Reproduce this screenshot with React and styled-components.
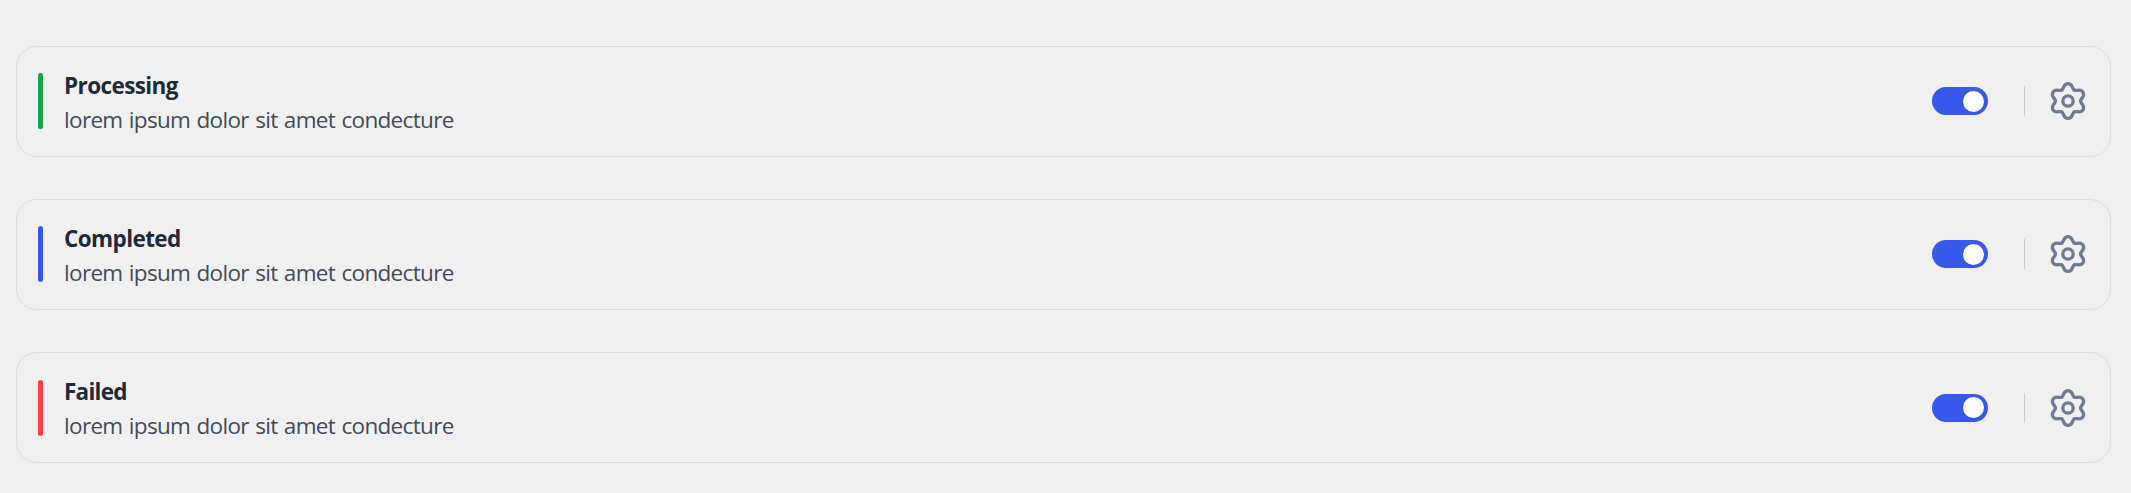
import { useState } from 'react';
import styled, { createGlobalStyle } from 'styled-components';



const statuses = [
    { title: 'Processing', text: 'lorem ipsum dolor sit amet condecture', color: '#16a34a', spacing: '-0.6px' },
    { title: 'Completed', text: 'lorem ipsum dolor sit amet condecture', color: '#3758f0', spacing: '-0.6px' },
    { title: 'Failed', text: 'lorem ipsum dolor sit amet condecture', color: '#ff3a44', spacing: '-0.75px' },
];

// one lobe of the gear, repeated every 60 degrees
const lobe = 'M-6.3 -10.9C-3.6 -12.5 -5 -17.4 0 -17.4C5 -17.4 3.6 -12.5 6.3 -10.9';

function GearIcon() {
    return (
        <svg width="42" height="42" viewBox="-21 -21 42 42" fill="none" stroke="currentColor" strokeWidth="3.3" strokeLinecap="round">
            {[0, 60, 120, 180, 240, 300].map((angle) => (
                <path key={angle} d={lobe} transform={`rotate(${angle})`} />
            ))}
            <circle r="5.2" />
        </svg>
    )
}

function StatusCard({ title, text, color, spacing }) {
    const [enabled, setEnabled] = useState(true);

    return (
        <Card>
            <Marker $color={color} />
            <Info>
                <Title $spacing={spacing}>{title}</Title>
                <Text>{text}</Text>
            </Info>
            <Toggle
                type="button"
                role="switch"
                aria-checked={enabled}
                aria-label={title}
                $on={enabled}
                onClick={() => setEnabled(!enabled)}
            >
                <Knob />
            </Toggle>
            <Divider />
            <IconButton type="button" aria-label="Settings">
                <GearIcon />
            </IconButton>
        </Card>
    )
}

function App() {
    return (
        <>
            <GlobalStyle />
            <List>
                {statuses.map((status) => (
                    <StatusCard key={status.title} {...status} />
                ))}
            </List>
        </>
    )
}



const GlobalStyle = createGlobalStyle`
    *
    {
        box-sizing: border-box;
    }

    body
    {
        margin: 0;
        background: #f0f0f0;
        font-family: 'Segoe UI', 'Open Sans', 'Noto Sans', sans-serif;
    }
`;

const List = styled.div`
    display: flex;
    flex-direction: column;
    gap: 42.2px;
    height: 493px;
    padding: 46px 20px 0 16px;
    overflow: hidden;
`;

const Card = styled.div`
    display: flex;
    flex-shrink: 0;
    align-items: center;
    height: 111px;
    padding: 0 21px 0.6px 21px;
    border: 1px solid #dedede;
    border-radius: 21px;
`;

const Marker = styled.div`
    width: 5px;
    height: 56px;
    border-radius: 3px;
    background: ${({ $color }) => $color};
`;

const Info = styled.div`
    flex: 1;
    margin-left: 21px;
    padding-top: 2px;
`;

const Title = styled.div`
    margin-bottom: -1px;
    font-size: 22.5px;
    font-weight: 700;
    line-height: 35px;
    letter-spacing: ${({ $spacing }) => $spacing};
    color: #1f2937;
`;

const Text = styled.div`
    font-size: 22.5px;
    line-height: 35px;
    letter-spacing: -0.67px;
    word-spacing: 1.1px;
    color: #434b59;
`;

const Toggle = styled.button`
    display: flex;
    align-items: center;
    justify-content: ${({ $on }) => ($on ? 'flex-end' : 'flex-start')};
    width: 56px;
    height: 28px;
    padding: 0 4px;
    border: none;
    border-radius: 14px;
    background: ${({ $on }) => ($on ? '#3758eb' : '#c4c8d0')};
    cursor: pointer;
`;

const Knob = styled.span`
    width: 21px;
    height: 21px;
    border-radius: 50%;
    background: #fff;
    box-shadow: 0 4px 4px rgba(0, 0, 0, 0.03);
`;

const Divider = styled.div`
    width: 1px;
    height: 30px;
    margin: 0 22px 0 36px;
    background: #cbcdd0;
`;

const IconButton = styled.button`
    display: flex;
    padding: 0;
    border: none;
    background: none;
    color: #717b90;
    cursor: pointer;
`;

export default App
